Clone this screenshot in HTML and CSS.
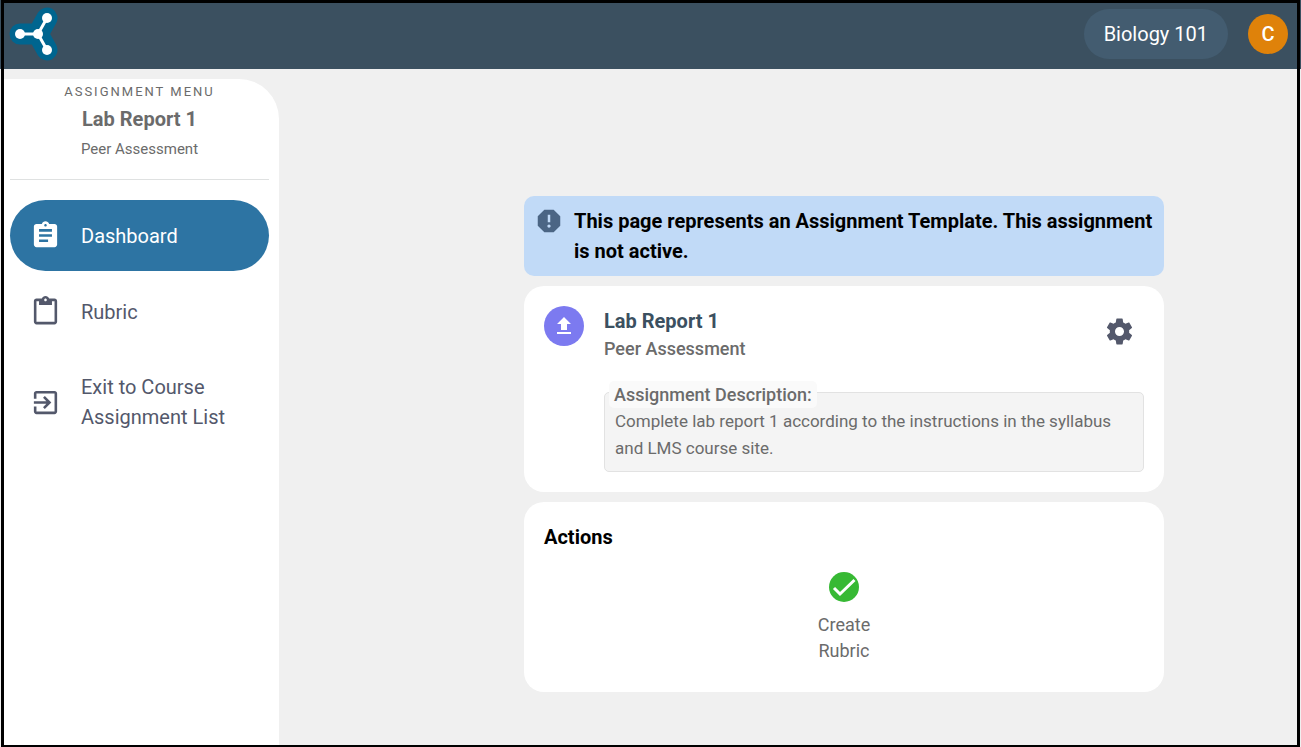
FILE: index.html
```html
<!DOCTYPE html>
<html lang="en">
<head>
<meta charset="utf-8">
<meta name="viewport" content="width=device-width, initial-scale=1">
<title>Lab Report 1</title>
<link rel="stylesheet" href="styles.css">
</head>
<body>
<div class="frame">
  <header class="topbar">
    <a class="logo" href="#" aria-label="Home">
      <svg width="50" height="54" viewBox="0 0 50 54">
        <g fill="none" stroke="#00658f" stroke-width="21" stroke-linecap="round" stroke-linejoin="round">
          <path d="M11 27H29L38 11M29 27L38 43"/>
        </g>
        <g fill="none" stroke="#fff" stroke-width="3"><path d="M11 27H29L38 11M29 27L38 43"/></g>
        <g fill="#fff"><circle cx="11" cy="27" r="5"/><circle cx="29" cy="27" r="5"/><circle cx="38" cy="11" r="5"/><circle cx="38" cy="43" r="5"/></g>
      </svg>
    </a>
    <button class="course" type="button">Biology 101</button>
    <button class="avatar" type="button">C</button>
  </header>
  <div class="body">
    <aside class="sidebar">
      <div class="menu-head">
        <p class="eyebrow">ASSIGNMENT MENU</p>
        <h2 class="menu-title">Lab Report 1</h2>
        <p class="menu-sub">Peer Assessment</p>
      </div>
      <nav class="nav">
        <a class="nav-item active" href="#">
          <svg class="icon" viewBox="0 0 24 24"><path d="M19 3h-4.180C14.400 1.840 13.300 1 12 1s-2.400.84-2.820 2H5c-1.100 0-2 .9-2 2v14c0 1.100.9 2 2 2h14c1.100 0 2-.9 2-2V5c0-1.100-.9-2-2-2zm-7 0c.55 0 1 .45 1 1s-.45 1-1 1-1-.45-1-1 .45-1 1-1zm2 14H7v-2h7v2zm3-4H7v-2h10v2zm0-4H7V7h10v2z"/></svg>
          <span>Dashboard</span>
        </a>
        <a class="nav-item" href="#">
          <svg class="icon" viewBox="0 0 24 24"><path d="M19 2h-4.180C14.400.84 13.300 0 12 0S9.600.84 9.180 2H5c-1.100 0-2 .9-2 2v16c0 1.100.9 2 2 2h14c1.100 0 2-.9 2-2V4c0-1.100-.9-2-2-2zm-7 0c.55 0 1 .45 1 1s-.45 1-1 1-1-.45-1-1 .45-1 1-1zm7 18H5V4h2v3h10V4h2v16z"/></svg>
          <span>Rubric</span>
        </a>
        <a class="nav-item" href="#">
          <svg class="icon" viewBox="0 0 24 24"><path d="M10.090 15.590L11.500 17l5-5-5-5-1.410 1.410L12.670 11H3v2h9.670l-2.580 2.590zM19 3H5c-1.110 0-2 .9-2 2v4h2V5h14v14H5v-4H3v4c0 1.100.89 2 2 2h14c1.100 0 2-.9 2-2V5c0-1.100-.9-2-2-2z"/></svg>
          <span>Exit to Course Assignment List</span>
        </a>
      </nav>
    </aside>
    <main class="main">
      <div class="content">
        <div class="notice">
          <svg class="notice-icon" viewBox="0 0 24 24"><path d="M15.730 3H8.270L3 8.270v7.460L8.270 21h7.460L21 15.730V8.270L15.730 3zM12 17.300c-.72 0-1.300-.58-1.300-1.300s.58-1.300 1.300-1.300 1.300.58 1.300 1.300-.58 1.300-1.300 1.300zm1-4.300h-2V7h2v6z"/></svg>
          <p class="notice-text">This page represents an Assignment Template. This assignment is not active.</p>
        </div>
        <section class="card">
          <div class="card-head">
            <span class="badge"><svg class="badge-icon" viewBox="0 0 24 24"><path d="M9 16h6v-6h4l-7-7-7 7h4zm-4 2h14v2H5z"/></svg></span>
            <div class="card-titles">
              <h1 class="card-title">Lab Report 1</h1>
              <p class="card-sub">Peer Assessment</p>
            </div>
            <button class="settings" type="button" aria-label="Settings">
              <svg class="icon" viewBox="0 0 24 24"><path d="M19.430 12.980c.04-.32.07-.64.07-.98s-.03-.66-.07-.98l2.110-1.650c.19-.15.24-.42.12-.64l-2-3.460c-.12-.22-.39-.3-.61-.22l-2.490 1c-.52-.4-1.080-.73-1.690-.98l-.38-2.650C14.460 2.180 14.250 2 14 2h-4c-.25 0-.46.18-.49.42l-.38 2.650c-.61.25-1.170.59-1.690.98l-2.490-1c-.23-.09-.49 0-.61.22l-2 3.460c-.13.22-.07.49.12.64l2.110 1.650c-.04.32-.07.65-.07.98s.03.66.07.98l-2.110 1.650c-.19.15-.24.42-.12.64l2 3.460c.12.22.39.3.61.22l2.490-1c.52.4 1.080.73 1.690.98l.38 2.650c.03.24.24.42.49.42h4c.25 0 .46-.18.49-.42l.38-2.650c.61-.25 1.170-.59 1.690-.98l2.490 1c.23.09.49 0 .61-.22l2-3.460c.12-.22.07-.49-.12-.64l-2.110-1.650zM12 15.500c-1.930 0-3.500-1.570-3.500-3.500s1.570-3.500 3.500-3.500 3.500 1.570 3.500 3.500-1.570 3.500-3.500 3.500z"/></svg>
            </button>
          </div>
          <div class="description">
            <h3 class="description-label">Assignment Description:</h3>
            <p class="description-text">Complete lab report 1 according to the instructions in the syllabus and LMS course site.</p>
          </div>
        </section>
        <section class="card">
          <h2 class="actions-title">Actions</h2>
          <button class="action" type="button">
            <svg class="action-icon" viewBox="0 0 30 30"><circle cx="15" cy="15" r="15" fill="#37b934"/><path d="M5 16l6 6L25.500 8" fill="none" stroke="#fff" stroke-width="3"/></svg>
            <span>Create<br>Rubric</span>
          </button>
        </section>
      </div>
    </main>
  </div>
</div>
</body>
</html>
```
FILE: styles.css
```css
* { box-sizing: border-box; }
body {
  margin: 0;
  padding: 0 1px;
  background: linear-gradient(#3b5060 69px, #f0f0f0 69px);
  font-family: Roboto, "Liberation Sans", sans-serif;
  color: #6b6b6b;
}
h1, h2, h3, p { margin: 0; }
button { border: 0; padding: 0; font: inherit; cursor: pointer; }
a { text-decoration: none; }
.frame {
  min-height: 100vh;
  display: flex;
  flex-direction: column;
  border: 3px solid #000;
  border-bottom-width: 2px;
  background: #f0f0f0;
}
.topbar {
  display: flex;
  align-items: center;
  gap: 20px;
  height: 66px;
  padding: 0 9px 4px 5px;
  background: #3b5060;
}
.logo { display: flex; margin-right: auto; }
.course {
  height: 50px;
  padding: 0 20px;
  border-radius: 25px;
  background: #435c70;
  color: #fff;
  font-size: 20px;
}
.avatar {
  width: 40px;
  height: 40px;
  border-radius: 50%;
  background: #df820a;
  color: #fff;
  font-size: 20px;
  font-weight: 500;
}
.body { flex: 1; display: flex; }
.sidebar {
  width: 275px;
  flex: none;
  margin-top: 10px;
  padding: 0 10px 0 6px;
  border-top-right-radius: 40px;
  background: #fff;
}
.menu-head {
  padding-bottom: 20px;
  border-bottom: 1px solid #dfe1e1;
  text-align: center;
}
.eyebrow { font-size: 13px; line-height: 25px; letter-spacing: 2px; }
.menu-title { font-size: 20px; line-height: 30px; font-weight: 700; }
.menu-sub { padding-top: 5px; font-size: 15px; line-height: 20px; }
.nav { display: flex; flex-direction: column; gap: 5px; padding-top: 20px; }
.nav-item {
  display: flex;
  align-items: center;
  gap: 20px;
  min-height: 71px;
  padding: 20px;
  border-radius: 36px;
  color: #53586b;
  font-size: 20px;
  line-height: 30px;
}
.icon { width: 31px; height: 31px; flex: none; fill: currentColor; }
.active { background: #2d74a3; color: #fff; }
.main {
  flex: 1;
  display: flex;
  justify-content: center;
  padding: 127px 0 53px 112px;
}
.content { width: 640px; display: flex; flex-direction: column; gap: 10px; }
.notice {
  display: flex;
  gap: 10px;
  padding: 10px;
  border-radius: 10px;
  background: #c1daf7;
  color: #000;
}
.notice-icon { width: 30px; height: 30px; flex: none; fill: #4b6584; }
.notice-text { font-size: 20px; line-height: 30px; font-weight: 700; }
.card { padding: 20px; border-radius: 20px; background: #fff; }
.card-head { display: flex; gap: 20px; }
.badge {
  width: 40px;
  height: 40px;
  display: flex;
  align-items: center;
  justify-content: center;
  border-radius: 50%;
  background: #7c7af0;
}
.badge-icon { width: 24px; height: 24px; fill: #fff; }
.card-titles { flex: 1; }
.card-title { font-size: 20px; line-height: 30px; font-weight: 700; color: #3b5060; }
.card-sub { font-size: 18px; line-height: 26px; font-weight: 500; }
.settings {
  width: 50px;
  height: 50px;
  display: flex;
  align-items: center;
  justify-content: center;
  background: none;
  color: #53586b;
}
.description {
  margin: 30px 0 0 60px;
  padding: 0 10px 9px 4px;
  border: 1px solid #e2e2e2;
  border-radius: 5px;
  background: #f4f4f4;
}
.description-label {
  width: max-content;
  margin-top: -12px;
  padding: 0 5px;
  border-radius: 5px;
  background: #fafafa;
  font-size: 18px;
  line-height: 27px;
  font-weight: 500;
}
.description-text { padding-left: 6px; font-size: 17px; line-height: 27px; }
.actions-title { font-size: 20px; line-height: 30px; font-weight: 700; color: #000; }
.action {
  display: flex;
  flex-direction: column;
  align-items: center;
  gap: 10px;
  margin: 20px auto 8px;
  background: none;
  color: #6b6b6b;
  font-size: 18px;
  line-height: 26px;
}
.action-icon { width: 30px; height: 30px; }
```
